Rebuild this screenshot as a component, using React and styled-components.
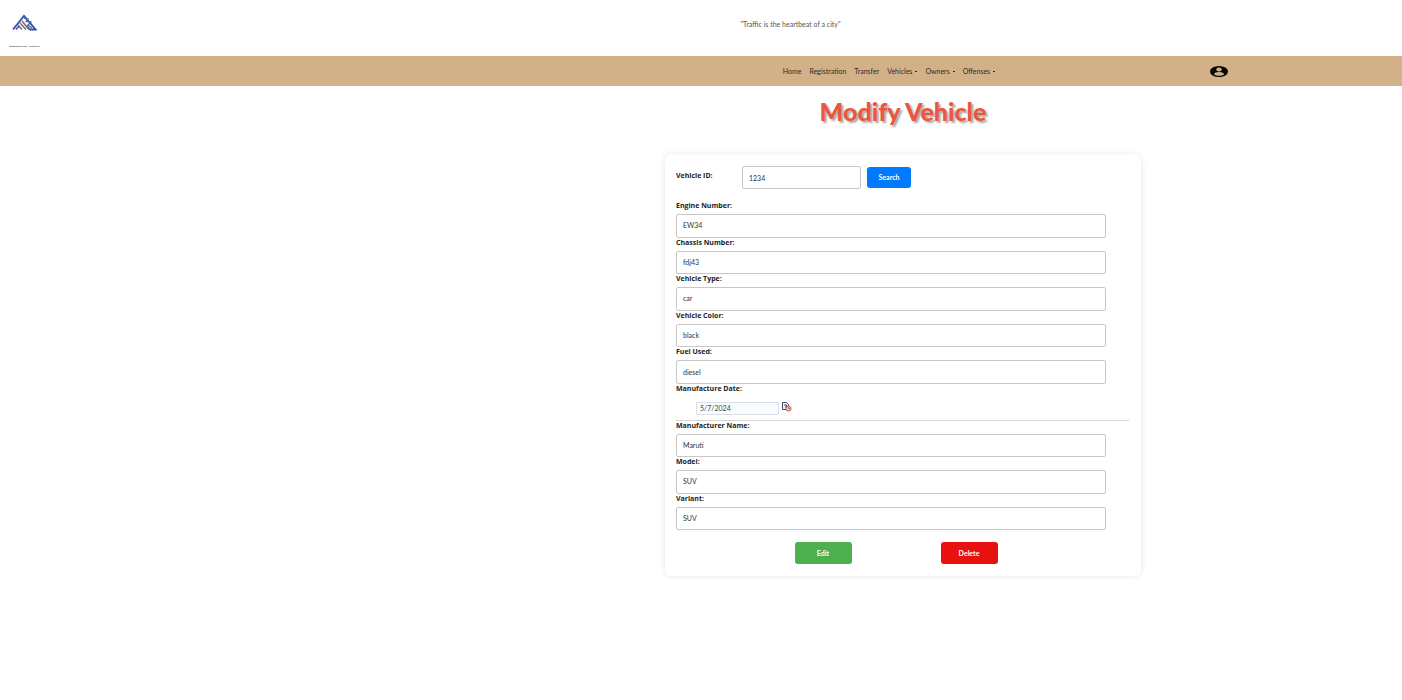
import React from "react";
import styled, { createGlobalStyle } from "styled-components";

const Global = createGlobalStyle`
  *, *::before, *::after { box-sizing: border-box; }
  body {
    margin: 0;
    background: #fff;
    color: #212529;
    font-family: Lato, "Open Sans", sans-serif;
    font-size: 7px;
    line-height: 13px;
  }
  input, button { font: inherit; }
`;

const Header = styled.header`
  display: flex;
  height: 56px;
`;

const Brand = styled.a`
  display: flex;
  flex-direction: column;
  align-items: center;
  width: 49px;
  padding-top: 14px;
  color: #444;
  font-family: "Open Sans", sans-serif;
  font-size: 2px;
  font-weight: 700;
  line-height: 4px;
  text-decoration: none;
  white-space: nowrap;
  svg { display: block; margin-bottom: 14px; }
`;

const Quote = styled.p`
  flex: 1;
  margin: 0;
  padding: 18px 0 0 130px;
  color: #555;
  text-align: center;
`;

const Nav = styled.nav`
  display: flex;
  align-items: center;
  height: 30px;
  padding: 0 174px 0 568px;
  background: #d3b188;
`;

const Links = styled.ul`
  display: flex;
  flex: 1;
  justify-content: center;
  gap: 8px;
  margin: 0;
  padding: 0;
  list-style: none;
`;

const NavLink = styled.a`
  display: flex;
  align-items: center;
  gap: 3px;
  color: #33291e;
  text-decoration: none;
`;

const Caret = styled.span`
  width: 2px;
  height: 1px;
  background: #33291e;
`;

const Account = styled.button`
  display: block;
  padding: 0;
  border: 0;
  background: none;
  svg { display: block; }
`;

const Main = styled.main`
  display: flex;
  flex-direction: column;
  align-items: center;
  padding: 0 0 40px 404px;
`;

const Title = styled.h1`
  margin: 9px 0 27px;
  color: #e9573f;
  font-family: "Comic Sans MS", Lato, sans-serif;
  font-size: 25px;
  font-weight: 900;
  line-height: 32px;
  text-shadow: 2px 2px 2px rgba(0, 0, 0, 0.35);
`;

const Card = styled.form`
  width: 48%;
  max-width: 476px;
  padding: 12px 12px 12px 11px;
  border-radius: 6px;
  background: #fff;
  box-shadow: 0 0 6px rgba(0, 0, 0, 0.1);
`;

const Label = styled.label`
  height: 13px;
  color: #222;
  font-family: "Open Sans", sans-serif;
  font-weight: 700;
  line-height: 10px;
`;

const TextInput = styled.input`
  min-width: 0;
  padding: 0 6px;
  border: 1px solid #c8c8c8;
  border-radius: 2px;
  background: #fff;
  color: #333;
`;

const SearchRow = styled.div`
  display: flex;
  align-items: center;
  margin-bottom: 12px;
  ${Label} { width: 66px; }
  ${TextInput} { width: 119px; height: 23px; margin-right: 6px; }
`;

const Button = styled.button`
  width: ${(p) => p.$width};
  height: ${(p) => p.$height};
  padding: 0;
  border: 0;
  border-radius: 3px;
  background: ${(p) => p.$color};
  color: #fff;
  font-weight: 700;
`;

const Fields = styled.div`
  display: grid;
  grid-auto-rows: 1fr;
  min-height: ${(p) => p.$height};
`;

const Field = styled.div`
  display: flex;
  flex-direction: column;
  ${TextInput} { flex: 1; width: 95%; }
`;

const DateField = styled.div`
  display: flex;
  flex-direction: column;
  height: 37px;
  border-bottom: 1px solid #d6d6d6;
`;

const DateRow = styled.div`
  display: flex;
  gap: 3px;
  padding: 5px 0 0 20px;
`;

const DateInput = styled.input`
  width: 83px;
  height: 13px;
  padding: 0 3px;
  border: 1px solid #d8dfe6;
  border-radius: 1px;
  background: #f8fcff;
  color: #444;
`;

const CalendarButton = styled.button`
  height: 10px;
  padding: 0;
  border: 0;
  background: none;
  svg { display: block; }
`;

const Actions = styled.div`
  display: flex;
  justify-content: center;
  gap: 89px;
  padding: 12px 13px 0 0;
`;

const Logo = () => (
  <svg width="25" height="17" viewBox="0 0 25 17" fill="none" aria-hidden="true">
    <path d="M1 15.500L12 2L23.500 15.500H18L14.500 11.500" stroke="#344fa5" strokeWidth="1.8" />
    <path d="M12 4.500L16 5L14 7.500L19 8L16 11L20 14" stroke="#4a62ae" strokeWidth="1.2" />
    <path d="M8 9L14 15.500M6 11L10 15.500M10 7L17 15.500" stroke="#77736e" strokeWidth="1.6" />
    <path d="M4 15.500L7 12" stroke="#344fa5" strokeWidth="1.4" />
  </svg>
);

const UserIcon = () => (
  <svg width="18" height="11" viewBox="0 0 18 11" aria-hidden="true">
    <ellipse cx="9" cy="5.500" rx="9" ry="5.500" fill="#080604" />
    <ellipse cx="9" cy="3.500" rx="2.700" ry="1.900" fill="#d3b188" />
    <path d="M3.800 8.300Q5 6 9 6T14.200 8.300Q12 9.800 9 9.800T3.800 8.300Z" fill="#d3b188" />
  </svg>
);

const CalendarIcon = () => (
  <svg width="10" height="10" viewBox="0 0 10 10" fill="none" aria-hidden="true">
    <path d="M.500 .500H4.500L6.500 2.500V7.500H.500Z" fill="#eef1fa" stroke="#45466f" />
    <path d="M2 3H4.500V5H3" stroke="#45466f" />
    <circle cx="6.500" cy="6.500" r="2.500" fill="#f3d0b4" stroke="#a2604f" />
    <path d="M6.500 5V6.500H8" stroke="#c83e35" strokeWidth=".8" />
  </svg>
);

const navItems = [
  ["Home"],
  ["Registration"],
  ["Transfer"],
  ["Vehicles", true],
  ["Owners", true],
  ["Offenses", true],
];

const engineFields = [
  ["engine", "Engine Number:", "EW34"],
  ["chassis", "Chassis Number:", "fdj43"],
  ["type", "Vehicle Type:", "car"],
  ["color", "Vehicle Color:", "black"],
  ["fuel", "Fuel Used:", "diesel"],
];

const makerFields = [
  ["maker", "Manufacturer Name:", "Maruti"],
  ["model", "Model:", "SUV"],
  ["variant", "Variant:", "SUV"],
];

const FieldGroup = ({ items, height }) => (
  <Fields $height={height}>
    {items.map(([id, label, value]) => (
      <Field key={id}>
        <Label htmlFor={id}>{label}</Label>
        <TextInput id={id} defaultValue={value} />
      </Field>
    ))}
  </Fields>
);

export default function App() {
  return (
    <>
      <Global />
      <Header>
        <Brand href="#">
          <Logo />
          shutterstock.com · 1479924377
        </Brand>
        <Quote>"Traffic is the heartbeat of a city"</Quote>
      </Header>
      <Nav>
        <Links>
          {navItems.map(([name, menu]) => (
            <li key={name}>
              <NavLink href="#">
                {name}
                {menu && <Caret />}
              </NavLink>
            </li>
          ))}
        </Links>
        <Account type="button" aria-label="Account">
          <UserIcon />
        </Account>
      </Nav>
      <Main>
        <Title>Modify Vehicle</Title>
        <Card onSubmit={(e) => e.preventDefault()}>
          <SearchRow>
            <Label htmlFor="vehicle-id">Vehicle ID:</Label>
            <TextInput id="vehicle-id" defaultValue="1234" />
            <Button type="button" $width="44px" $height="21px" $color="#007bff">Search</Button>
          </SearchRow>
          <FieldGroup items={engineFields} height="183px" />
          <DateField>
            <Label htmlFor="made">Manufacture Date:</Label>
            <DateRow>
              <DateInput id="made" defaultValue="5/7/2024" />
              <CalendarButton type="button" aria-label="Pick a date">
                <CalendarIcon />
              </CalendarButton>
            </DateRow>
          </DateField>
          <FieldGroup items={makerFields} height="109px" />
          <Actions>
            <Button type="button" $width="57px" $height="22px" $color="#4caf50">Edit</Button>
            <Button type="button" $width="57px" $height="22px" $color="#e91010">Delete</Button>
          </Actions>
        </Card>
      </Main>
    </>
  );
}
